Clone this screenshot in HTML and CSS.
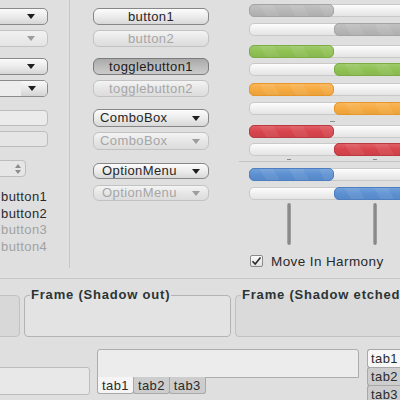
FILE: index.html
```html
<!DOCTYPE html>
<html>
<head>
<meta charset="utf-8">
<link rel="stylesheet" href="styles.css">
</head>
<body>
<div class="page">
  <div class="top">
    <div class="left">
      <div class="combo w-c1"><span class="arrow"></span></div>
      <div class="combo dis w-c2"><span class="arrow"></span></div>
      <div class="combo w-c3"><span class="arrow"></span></div>
      <div class="combo centry w-c4"><div class="epart"></div><div class="bpart"><span class="arrow"></span></div></div>
      <div class="entry w-e1"></div>
      <div class="entry dis w-e2"></div>
      <div class="spin"><div class="spinarrows"><span class="up"></span><span class="down"></span></div></div>
      <div class="labels">
        <div class="lbl">button1</div>
        <div class="lbl">button2</div>
        <div class="lbl dim">button3</div>
        <div class="lbl dim">button4</div>
      </div>
    </div>
    <div class="vsep"></div>
    <div class="mid">
      <div class="btn b1">button1</div>
      <div class="btn dis b2">button2</div>
      <div class="btn pressed b3">togglebutton1</div>
      <div class="btn dis b4">togglebutton2</div>
      <div class="btn cbox b5"><span>ComboBox</span><span class="arrow"></span></div>
      <div class="btn cbox dis b6"><span>ComboBox</span><span class="arrow"></span></div>
      <div class="btn cbox omenu b7"><span>OptionMenu</span><span class="arrow"></span></div>
      <div class="btn cbox omenu dis b8"><span>OptionMenu</span><span class="arrow"></span></div>
    </div>
    <div class="right">
      <div class="bar gray"><div class="fill"></div></div>
      <div class="bar gray rev p1"><div class="fill"></div></div>
      <div class="bar green p2"><div class="fill"></div></div>
      <div class="bar green rev p1b"><div class="fill"></div></div>
      <div class="bar orange p3"><div class="fill"></div></div>
      <div class="bar orange rev p1"><div class="fill"></div></div>
      <div class="tick t1"></div>
      <div class="bar red p4"><div class="fill"></div></div>
      <div class="bar red rev p1b"><div class="fill"></div></div>
      <div class="ticks"><span class="tk a"></span><span class="tk b"></span></div>
      <div class="hline"></div>
      <div class="bar blue p5"><div class="fill"></div></div>
      <div class="bar blue rev p5"><div class="fill"></div></div>
      <div class="vbars"><span class="vbar"></span><span class="vbar"></span></div>
      <div class="check">
        <span class="cbx"><svg width="11" height="10" viewBox="0 0 11 10"><path d="M1.5 5.2 L4.2 8 L9.5 1.5" fill="none" stroke="#2a2a2a" stroke-width="1.6"/></svg></span>
        <span class="ctext">Move In Harmony</span>
      </div>
    </div>
  </div>
  <div class="hsep"></div>
  <div class="frames">
    <div class="frame0"></div>
    <fieldset class="frame f1"><legend>Frame (Shadow out)</legend></fieldset>
    <fieldset class="frame f2"><legend>Frame (Shadow etched)</legend></fieldset>
  </div>
  <div class="bottom">
    <div class="lbox"></div>
    <div class="nb">
      <div class="nbpanel"></div>
      <div class="nbtabs">
        <div class="tab active">tab1</div>
        <div class="tab">tab2</div>
        <div class="tab">tab3</div>
      </div>
    </div>
    <div class="vnb">
      <div class="vtab active">tab1</div>
      <div class="vtab">tab2</div>
      <div class="vtab">tab3</div>
    </div>
  </div>
</div>
</body>
</html>
```

FILE: styles.css
```css
html, body {
  margin: 0;
  padding: 0;
  background: #dfdfdf;
}
.page {
  width: 400px;
  height: 400px;
  overflow: hidden;
  background: #dfdfdf;
  font-family: "Liberation Sans", Arial, sans-serif;
  font-size: 13px;
  color: #2e2e2e;
  letter-spacing: 0.4px;
}
.top {
  display: flex;
  height: 270px;
}

/* left column */
.left {
  flex: none;
  width: 60px;
  margin-left: -12px;
  padding-top: 8px;
}
.combo {
  box-sizing: border-box;
  height: 17px;
  border: 1px solid #8a8a8a;
  border-radius: 5px;
  background: linear-gradient(#fbfbfb, #e9e9e9 55%, #d6d6d6);
  display: flex;
  align-items: center;
  justify-content: flex-end;
  padding-right: 12px;
}
.combo.dis {
  border-color: #c3c3c3;
  background: linear-gradient(#f1f1f1, #e4e4e4);
}
.arrow {
  width: 0;
  height: 0;
  border-left: 4px solid transparent;
  border-right: 4px solid transparent;
  border-top: 5px solid #1e1e1e;
}
.dis .arrow {
  border-top-color: #9c9c9c;
}
.w-c2 { margin-top: 5px; }
.w-c3 { margin-top: 11px; }
.w-c4 { margin-top: 5px; padding-right: 0; overflow: hidden; }
.centry .epart {
  flex: 1;
  align-self: stretch;
  background: #ededed;
}
.centry .bpart {
  width: 26px;
  align-self: stretch;
  background: linear-gradient(#f8f8f8, #e6e6e6 55%, #d4d4d4);
  display: flex;
  align-items: center;
  justify-content: center;
  padding-right: 4px;
  box-sizing: border-box;
}
.entry {
  box-sizing: border-box;
  height: 16px;
  border: 1px solid #bcbcbc;
  border-radius: 4px;
  background: #ebebeb;
}
.entry.dis { background: #e5e5e5; }
.w-e1 { margin-top: 13px; }
.w-e2 { margin-top: 5px; }
.spin {
  box-sizing: border-box;
  width: 38px;
  height: 17px;
  margin-top: 13px;
  border: 1px solid #bdbdbd;
  border-radius: 4px;
  background: #e6e6e6;
  display: flex;
  justify-content: flex-end;
  align-items: center;
  padding-right: 4px;
}
.spinarrows {
  display: flex;
  flex-direction: column;
  gap: 2px;
}
.spinarrows .up {
  width: 0; height: 0;
  border-left: 3px solid transparent;
  border-right: 3px solid transparent;
  border-bottom: 4px solid #8c8c8c;
}
.spinarrows .down {
  width: 0; height: 0;
  border-left: 3px solid transparent;
  border-right: 3px solid transparent;
  border-top: 4px solid #8c8c8c;
}
.labels {
  margin-top: 12px;
  margin-left: 13px;
}
.lbl {
  height: 16.5px;
  line-height: 16.5px;
  white-space: nowrap;
  color: #2a2a2a;
}
.lbl.dim { color: #a2a2a2; }

.vsep {
  flex: none;
  width: 1px;
  height: 268px;
  margin-left: 21px;
  background: #c6c6c6;
}

/* middle column */
.mid {
  flex: none;
  width: 116px;
  margin-left: 23px;
  padding-top: 8px;
}
.btn {
  box-sizing: border-box;
  height: 17px;
  border: 1px solid #878787;
  border-radius: 6px;
  background: linear-gradient(#fcfcfc, #ececec 50%, #d8d8d8);
  text-align: center;
  line-height: 15px;
  white-space: nowrap;
  color: #262626;
}
.btn.dis {
  border-color: #c2c2c2;
  background: linear-gradient(#f4f4f4, #e5e5e5 55%, #dcdcdc);
  color: #a6a6a6;
}
.btn.pressed {
  border-color: #7c7c7c;
  background: linear-gradient(#a9a9a9, #bcbcbc 50%, #cbcbcb);
  color: #1c1c1c;
}
.b2 { margin-top: 5px; }
.b3 { margin-top: 11px; }
.b4 { margin-top: 5px; }
.cbox {
  height: 18px;
  display: flex;
  align-items: center;
  justify-content: space-between;
  padding: 0 8px 0 6px;
  line-height: 16px;
  text-align: left;
}
.b5 { margin-top: 12px; }
.b6 { margin-top: 5px; }
.omenu { height: 16px; line-height: 14px; }
.b7 { margin-top: 13px; padding-left: 8px; }
.b8 { margin-top: 6px; padding-left: 8px; }

/* right column */
.right {
  flex: 1;
  min-width: 0;
  margin-left: 30px;
  padding-top: 4px;
}
.bar {
  box-sizing: border-box;
  width: 170px;
  height: 13px;
  margin-left: 10px;
  border: 1px solid #c9c9c9;
  border-radius: 5px;
  background: linear-gradient(#fdfdfd, #f0f0f0 50%, #e4e4e4);
  display: flex;
}
.bar .fill {
  box-sizing: border-box;
  width: 85px;
  margin: -1px;
  border-radius: 5px;
  border: 1px solid #9f9f9f;
  background:
    repeating-linear-gradient(62deg, rgba(255,255,255,0) 0 14px, rgba(255,255,255,0.07) 14px 26px),
    linear-gradient(rgba(255,255,255,0.14), rgba(255,255,255,0) 50%, rgba(0,0,0,0.05));
  background-color: #b6b6b6;
}
.bar.rev { justify-content: flex-end; }
.bar.rev .fill { margin-left: 84px; width: 90px; }
.bar.gray .fill { background-color: #b7b7b7; border-color: #a4a4a4; }
.bar.green .fill { background-color: #8fc153; border-color: #7cad43; }
.bar.orange .fill { background-color: #f6aa3f; border-color: #e8962a; }
.bar.red .fill { background-color: #d8444c; border-color: #bd3940; }
.bar.blue .fill { background-color: #5c90d2; border-color: #4c7fc2; }
.p1 { margin-top: 6px; }
.p1b { margin-top: 5px; }
.p2 { margin-top: 9px; }
.p3 { margin-top: 7px; }
.p4 { margin-top: 3px; }
.p5 { margin-top: 6px; }
.tick {
  width: 5px;
  height: 1px;
  background: #8f8f8f;
}
.t1 { margin-top: 6px; margin-left: 91px; }
.ticks {
  display: flex;
  height: 2px;
  margin-top: 3px;
}
.tk {
  width: 4px;
  height: 1px;
  background: #8a8a8a;
}
.tk.a { margin-left: 48px; }
.tk.b { margin-left: 82px; }
.hline {
  height: 1px;
  background: #c3c3c3;
}
.vbars {
  display: flex;
  margin-top: 3px;
  margin-left: 48px;
  gap: 82px;
}
.vbar {
  width: 4px;
  height: 42px;
  border-radius: 2px;
  background: linear-gradient(90deg, #b2b2b2, #7e7e7e 50%, #a6a6a6);
}
.check {
  display: flex;
  align-items: center;
  margin-top: 8px;
  margin-left: 11px;
  height: 16px;
}
.cbx {
  box-sizing: border-box;
  width: 13px;
  height: 12px;
  border: 1px solid #8a8a8a;
  border-radius: 2px;
  background: linear-gradient(#fafafa, #e2e2e2);
  display: flex;
  align-items: center;
  justify-content: center;
}
.ctext {
  margin-left: 8px;
  font-size: 13.5px;
  color: #2a2a2a;
  white-space: nowrap;
}

.hsep {
  height: 1px;
  margin-top: 8px;
  background: #c6c6c6;
}

/* frames */
.frames {
  display: flex;
  align-items: flex-start;
  margin-top: 8px;
}
.frame0 {
  flex: none;
  box-sizing: border-box;
  width: 40px;
  height: 42px;
  margin-left: -20px;
  margin-top: 8px;
  border: 1px solid #c2c2c2;
  border-radius: 4px;
  background: #d8d8d8;
}
.frame {
  flex: none;
  box-sizing: border-box;
  margin: 0;
  padding: 0 0 0 5px;
  border: 1px solid #b3b3b3;
  border-radius: 4px;
  height: 50px;
}
.frame legend {
  padding: 0 1px;
  font-weight: bold;
  font-size: 13px;
  line-height: 16px;
  letter-spacing: 0.8px;
  color: #2b3434;
  white-space: nowrap;
}
.f1 {
  width: 207px;
  margin-left: 4px;
  background: #e3e3e3;
}
.f2 {
  width: 220px;
  margin-left: 4px;
  border-color: #c0c0c0;
  background: #dadada;
}

/* bottom */
.bottom {
  display: flex;
  align-items: flex-start;
  margin-top: 12px;
}
.lbox {
  flex: none;
  box-sizing: border-box;
  width: 100px;
  height: 28px;
  margin-left: -10px;
  margin-top: 18px;
  border: 1px solid #bdbdbd;
  border-radius: 3px;
  background: #e8e8e8;
}
.nb {
  flex: none;
  width: 262px;
  margin-left: 7px;
}
.nbpanel {
  box-sizing: border-box;
  height: 29px;
  border: 1px solid #adadad;
  border-radius: 3px 3px 0 0;
  background: #ececec;
}
.nbtabs {
  display: flex;
  margin-top: -1px;
}
.tab {
  box-sizing: border-box;
  height: 17px;
  padding: 0 4px;
  border: 1px solid #a8a8a8;
  border-top: none;
  border-radius: 0 0 3px 3px;
  background: #cdcdcd;
  line-height: 17px;
  color: #2a2a2a;
}
.tab + .tab { margin-left: -1px; }
.tab.active {
  background: #f5f5f5;
  position: relative;
  z-index: 1;
}
.vnb {
  flex: none;
  margin-left: 8px;
  width: 40px;
}
.vtab {
  box-sizing: border-box;
  height: 19px;
  padding-left: 3px;
  border: 1px solid #a8a8a8;
  border-right: none;
  border-radius: 3px 0 0 3px;
  background: #cdcdcd;
  line-height: 17px;
  color: #2a2a2a;
}
.vtab + .vtab { margin-top: -1px; }
.vtab.active { background: #f7f7f7; }
```
